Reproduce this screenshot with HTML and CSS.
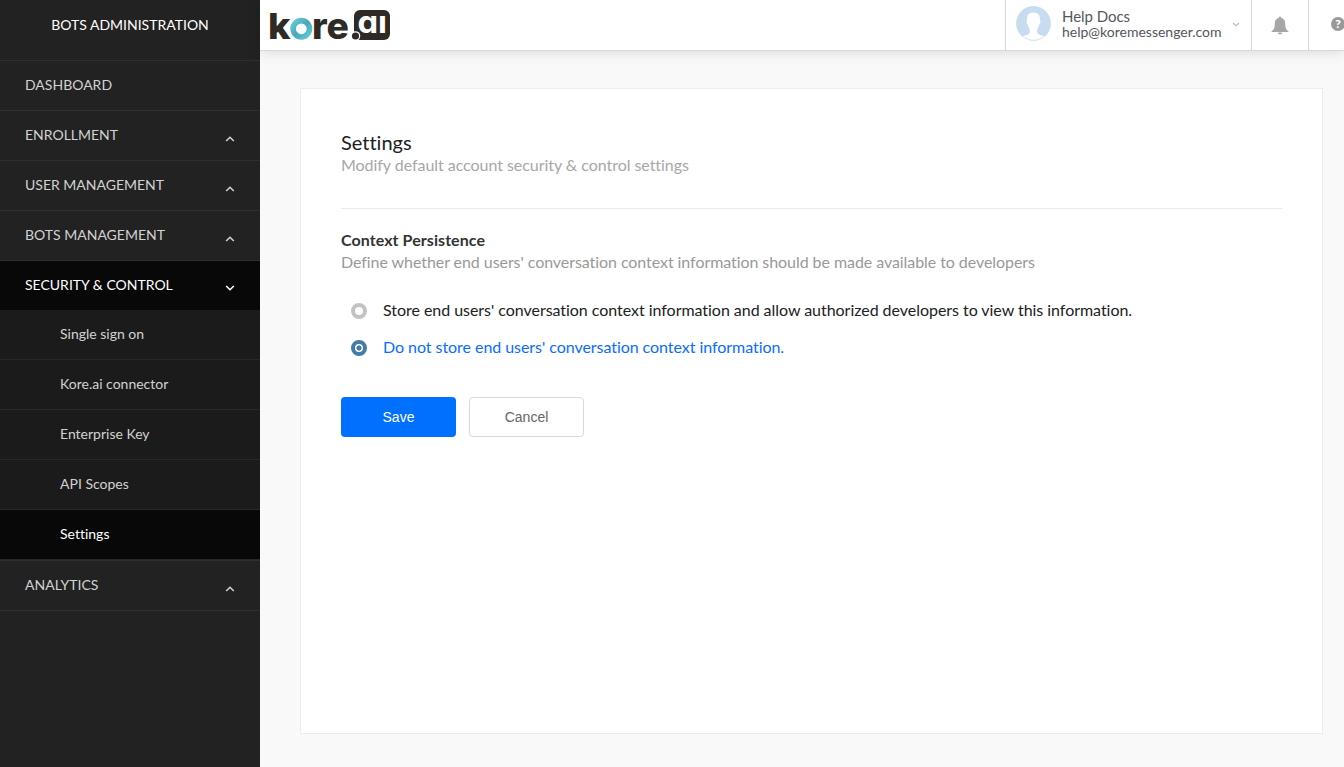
FILE: index.html
```html
<!DOCTYPE html>
<html lang="en">
<head>
<meta charset="utf-8">
<title>Bots Administration</title>
<link rel="stylesheet" href="styles.css">
</head>
<body>
<div class="app">
  <nav class="sidebar">
    <div class="sidebar-title">BOTS ADMINISTRATION</div>
    <a class="item"><span>DASHBOARD</span></a>
    <a class="item"><span>ENROLLMENT</span><svg class="chev" viewBox="0 0 10 6"><path d="M1.2 5 5 1.3 8.8 5"/></svg></a>
    <a class="item"><span>USER MANAGEMENT</span><svg class="chev" viewBox="0 0 10 6"><path d="M1.2 5 5 1.3 8.8 5"/></svg></a>
    <a class="item"><span>BOTS MANAGEMENT</span><svg class="chev" viewBox="0 0 10 6"><path d="M1.2 5 5 1.3 8.8 5"/></svg></a>
    <a class="item open"><span>SECURITY &amp; CONTROL</span><svg class="chev" viewBox="0 0 10 6"><path d="M1.2 1 5 4.7 8.8 1"/></svg></a>
    <div class="submenu">
      <a class="sub">Single sign on</a>
      <a class="sub">Kore.ai connector</a>
      <a class="sub">Enterprise Key</a>
      <a class="sub">API Scopes</a>
      <a class="sub current">Settings</a>
    </div>
    <a class="item"><span>ANALYTICS</span><svg class="chev" viewBox="0 0 10 6"><path d="M1.2 5 5 1.3 8.8 5"/></svg></a>
  </nav>
  <div class="main">
    <header class="topbar">
      <svg class="logo" viewBox="0 0 122 50">
        <defs><linearGradient id="ring" x1="0" y1="0" x2="1" y2="1"><stop offset="0" stop-color="#64cbd9"/><stop offset=".5" stop-color="#4ea6b4"/><stop offset="1" stop-color="#5fcada"/></linearGradient></defs>
        <text class="word" x="-1" y="38.7" textLength="22.5" lengthAdjust="spacingAndGlyphs">k</text>
        <circle cx="32.3" cy="28.8" r="8.2" fill="none" stroke="url(#ring)" stroke-width="5.6"/>
        <text class="word" x="43" y="38.7" textLength="37" lengthAdjust="spacingAndGlyphs">re</text>
        <rect x="85" y="10" width="36" height="30" rx="6" fill="#2e2a26"/>
        <circle cx="86.5" cy="36" r="4.800" fill="#fff"/>
        <circle cx="86.5" cy="36" r="3.600" fill="#2e2a26"/>
        <text class="word ai" x="88.5" y="33.4" textLength="29.500" lengthAdjust="spacingAndGlyphs">aı</text>
      </svg>
      <div class="account">
        <svg class="avatar" viewBox="0 0 35 35"><circle cx="17.5" cy="17.5" r="17.2" fill="#c7dcf1"/><path d="M17.4 6.5 C13 6.5 10.8 9.3 11 13.5 Q10.1 14.5 10.9 17.5 L12 19.3 Q12.5 22 13.8 23.5 V26.5 Q13.5 28.2 10.5 29.1 Q7 30 5.300 31 Q10.5 35 17.5 34.7 Q24.5 35 29.7 31 Q28 30 24.5 29.1 Q21.5 28.2 21.2 26.5 V23.5 Q22.5 22 23 19.3 L24.1 17.5 Q24.9 14.5 24 13.5 C24.2 9.3 22 6.5 17.4 6.5 Z" fill="#fff"/><circle cx="17.5" cy="17.5" r="16.8" fill="none" stroke="#c7dcf1" stroke-width=".8"/></svg>
        <div class="who"><div class="name">Help Docs</div><div class="mail">help@koremessenger.com</div></div>
        <svg class="caret" viewBox="0 0 8 5"><path d="M1 1 4 3.8 7 1"/></svg>
      </div>
      <div class="bell"><svg viewBox="0 0 18 19"><path d="M9 .5Q10.4 .5 10.4 2Q14.2 3 14.2 7.5C14.2 12 15 13.5 17.5 15.5V16H.5V15.5C3 13.5 3.8 12 3.8 7.5Q3.8 3 7.6 2Q7.6 .5 9 .5ZM6.8 16.5H11.2Q11 18.6 9 18.6Q7 18.6 6.8 16.5Z" fill="#a6a6a6"/></svg></div>
      <div class="help"><span>?</span></div>
    </header>
    <section class="card">
      <h1>Settings</h1>
      <p class="lead">Modify default account security &amp; control settings</p>
      <h2>Context Persistence</h2>
      <p class="desc">Define whether end users' conversation context information should be made available to developers</p>
      <label class="option"><i class="radio"></i><span>Store end users' conversation context information and allow authorized developers to view this information.</span></label>
      <label class="option chosen"><i class="radio"></i><span>Do not store end users' conversation context information.</span></label>
      <div class="actions"><button class="save">Save</button><button class="cancel">Cancel</button></div>
    </section>
  </div>
</div>
</body>
</html>
```
FILE: styles.css
```css
* { box-sizing: border-box; }
body { margin: 0; font-family: Lato, sans-serif; font-variant-ligatures: none; background: #f9f9f9; overflow: hidden; }
.app { display: flex; height: 767px; }
.sidebar { width: 260px; flex: none; background: #222; color: #d2d2d2; font-size: 14px; }
.sidebar-title { height: 61px; line-height: 50px; text-align: center; color: #fff; border-bottom: 1px solid #2f2f2f; }
.item { display: flex; justify-content: space-between; height: 50px; line-height: 48px; padding: 0 25.5px 0 25px; border-bottom: 1px solid #2f2f2f; }
.chev { width: 10px; height: 6px; margin-top: 25px; fill: none; stroke: #d2d2d2; stroke-width: 1.6; }
.item.open { height: 49px; background: #080808; color: #fff; border-bottom: 0; }
.open .chev { stroke: #fff; margin-top: 24px; }
.submenu { background: #1b1b1b; border-bottom: 1px solid #2f2f2f; }
.sub { display: block; height: 50px; line-height: 47px; padding-left: 60px; border-bottom: 1px solid #282828; }
.current { background: #080808; color: #fff; }
.main { flex: 1; min-width: 0; display: flex; flex-direction: column; }
.topbar { flex: none; height: 51px; background: #fff; border-bottom: 1px solid #d8d8d8; box-shadow: 0 2px 12px rgba(0,0,0,.12); display: flex; }
.logo { width: 122px; height: 50px; margin: 0 auto 0 9px; overflow: visible; }
.word { font: 800 36px Inter, sans-serif; fill: #2e2a26; }
.word.ai { font-size: 31px; font-weight: 700; font-feature-settings: "cv11", "ss01"; fill: #fff; }
.account { width: 246px; flex: none; border-left: 1px solid #d8d8d8; padding: 6px 0 0 10px; display: flex; color: #54565e; }
.avatar { flex: none; width: 35px; height: 35px; }
.who { flex: none; width: 160px; margin: 2px 10px 0 11px; line-height: 16px; white-space: nowrap; }
.name { font-size: 15px; letter-spacing: -.05px; }
.mail { font-size: 14px; }
.caret { width: 8px; height: 5px; margin-top: 16px; fill: none; stroke: #bbb; stroke-width: 1.2; }
.bell { width: 57px; flex: none; border-left: 1px solid #d8d8d8; padding: 16px 0 0 19px; }
.bell svg { width: 18px; height: 19px; display: block; }
.help { width: 36px; flex: none; border-left: 1px solid #d8d8d8; padding: 17px 0 0 22px; overflow: hidden; }
.help span { display: block; width: 14px; height: 14px; border-radius: 50%; background: #999; color: #fff; font: 900 12px/14px Lato, sans-serif; text-align: center; }
.card { width: 1023px; height: 646px; margin: 37px 0 0 40px; padding: 41px 40px; background: #fff; border: 1px solid #ededed; }
h1 { margin: 0; font-size: 20px; line-height: 24px; font-weight: 400; color: #202124; }
.lead { margin: 0 0 20px; border-bottom: 1px solid #ebebeb; color: #a7a7a7; font-size: 16px; line-height: 22px; height: 55px; letter-spacing: -.045px; }
h2 { margin: 0; font-size: 16px; line-height: 22px; font-weight: 700; letter-spacing: .07px; color: #333; }
.desc { margin: 0 0 26px; color: #999; font-size: 16px; line-height: 22px; letter-spacing: -.065px; }
.option { display: flex; height: 22px; margin: 0 0 15px 10px; color: #202124; font-size: 16px; line-height: 22px; letter-spacing: -.038px; white-space: nowrap; }
.radio { flex: none; width: 16px; height: 16px; margin: 4px 16px 0 0; border: 4px solid #c2c2c2; border-radius: 50%; }
.chosen { color: #0a6cff; letter-spacing: -.05px; }
.chosen .radio { border-color: #437cab; background: radial-gradient(circle, #437cab 0 2.3px, #fff 2.9px); }
.actions { display: flex; gap: 13px; margin-top: 39px; }
button { width: 115px; height: 40px; padding: 0; border-radius: 4px; font: 14px "Liberation Sans", Arial, sans-serif; }
.save { background: #0070ff; color: #fff; border: 0; }
.cancel { background: #fff; color: #666; border: 1px solid #d9d9d9; }
```
